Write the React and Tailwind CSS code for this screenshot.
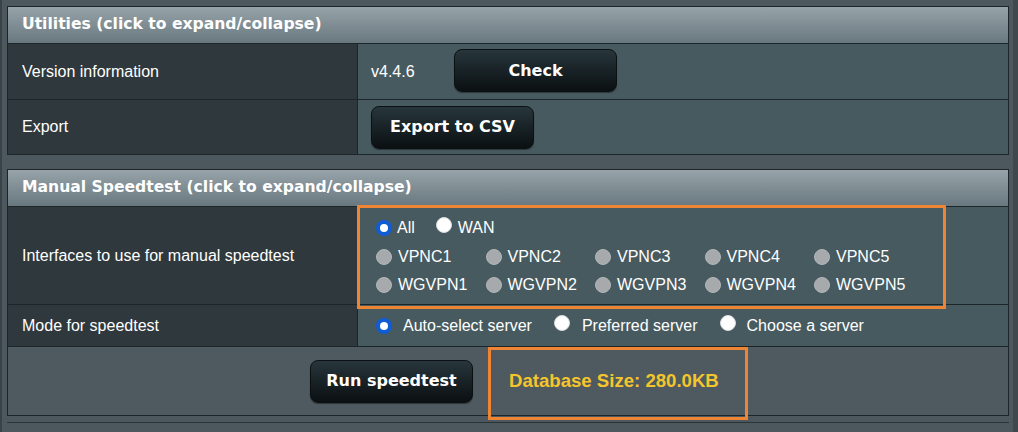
import React from "react";

const body = { fontFamily: '"Liberation Sans", Arial, sans-serif' };
const bold = { fontFamily: '"DejaVu Sans", Verdana, sans-serif' };

function Radio({ state }) {
  if (state === "checked")
    return (
      <span className="inline-flex w-[16px] h-[16px] rounded-full bg-[#0f5cd4] items-center justify-center shrink-0">
        <span className="w-[8px] h-[8px] rounded-full bg-white" />
      </span>
    );
  if (state === "on")
    return <span className="inline-block w-[16px] h-[16px] rounded-full bg-white border border-[#d9dcdd] shrink-0" />;
  return <span className="inline-block w-[16px] h-[16px] rounded-full bg-[#a6aaac] border border-[#b3b6b8] shrink-0" />;
}

function Btn({ children, className = "" }) {
  return (
    <div
      className={`h-[43px] w-[163px] rounded-[8px] border border-[#0b1113] bg-gradient-to-b from-[#27363c] to-[#0b1012] flex items-center justify-center text-white font-bold text-[16px] shadow-[0_1px_1px_rgba(0,0,0,0.4)] ${className}`}
      style={bold}
    >
      {children}
    </div>
  );
}

function Header({ children }) {
  return (
    <div
      className="h-[37px] bg-gradient-to-b from-[#97a3a9] to-[#69787f] border-b border-[#1c2528] flex items-center pl-[14px] text-white font-bold text-[15.6px]"
      style={bold}
    >
      {children}
    </div>
  );
}

function Row({ label, h, children, last }) {
  return (
    <div className={`flex ${last ? "" : "border-b border-[#1c2528]"}`} style={{ height: h }}>
      <div className="w-[350px] shrink-0 bg-[#2f383c] border-r border-[#1c2528] flex items-center pl-[14px] text-white text-[16px]">
        {label}
      </div>
      <div className="flex-1 bg-[#475a5f] flex items-center pl-[13px] text-white text-[16px]">{children}</div>
    </div>
  );
}

const vpnc = ["VPNC1", "VPNC2", "VPNC3", "VPNC4", "VPNC5"];
const wg = ["WGVPN1", "WGVPN2", "WGVPN3", "WGVPN4", "WGVPN5"];

export default function App() {
  return (
    <div className="w-[1018px] h-[432px] bg-[#4c585d] relative overflow-hidden flex" style={body}>
      <div className="w-[2px] bg-[#394246] shrink-0" />
      <div className="w-[1011px] shrink-0 pl-[5px] pt-[6px]">
        <div className="w-[1002px] border border-[#1c2528]">
          <Header>Utilities (click to expand/collapse)</Header>
          <Row label="Version information" h={56}>
            <span className="w-[83px]">v4.4.6</span>
            <Btn className="-mt-[2px]">Check</Btn>
          </Row>
          <Row label="Export" h={54} last>
            <Btn>Export to CSV</Btn>
          </Row>
        </div>

        <div className="w-[1002px] border border-[#1c2528] mt-[14px]">
          <Header>Manual Speedtest (click to expand/collapse)</Header>
          <div className="flex border-b border-[#1c2528] h-[98px]">
            <div className="w-[350px] shrink-0 bg-[#2f383c] border-r border-[#1c2528] flex items-center pl-[14px] text-white text-[16px]">
              Interfaces to use for manual speedtest
            </div>
            <div className="flex-1 bg-[#475a5f] flex flex-col justify-center pl-[18px] pt-[2px] text-white text-[16px]">
              <div className="h-[28.5px] flex items-center">
                <Radio state="checked" />
                <span className="ml-[5px]">All</span>
                <span className="ml-[21px]"><Radio state="on" /></span>
                <span className="ml-[6px]">WAN</span>
              </div>
              <div className="h-[28.5px] grid grid-cols-[repeat(5,109.5px)] items-center">
                {vpnc.map((v) => (
                  <div key={v} className="flex items-center">
                    <Radio />
                    <span className="ml-[6px]">{v}</span>
                  </div>
                ))}
              </div>
              <div className="h-[28.5px] grid grid-cols-[repeat(5,109.5px)] items-center">
                {wg.map((v) => (
                  <div key={v} className="flex items-center">
                    <Radio />
                    <span className="ml-[6px]">{v}</span>
                  </div>
                ))}
              </div>
            </div>
          </div>
          <div className="flex border-b border-[#1c2528] h-[42px]">
            <div className="w-[350px] shrink-0 bg-[#2f383c] border-r border-[#1c2528] flex items-center pl-[14px] text-white text-[16px]">
              Mode for speedtest
            </div>
            <div className="flex-1 bg-[#475a5f] flex items-center pl-[18px] text-white text-[16px]">
              <Radio state="checked" />
              <span className="ml-[11px]">Auto-select server</span>
              <span className="ml-[22px]"><Radio state="on" /></span>
              <span className="ml-[12px]">Preferred server</span>
              <span className="ml-[22px]"><Radio state="on" /></span>
              <span className="ml-[11px]">Choose a server</span>
            </div>
          </div>
          <div className="h-[68px] bg-[#4e5a5f] flex items-center pl-[302px]">
            <Btn className="w-[162px]">Run speedtest</Btn>
            <span className="ml-[36px] text-[18.6px] font-bold text-[#f5c52c]">Database Size: 280.0KB</span>
          </div>
        </div>
        <div className="w-[1002px] mt-[6px] border-t border-[#2a3336]" />
      </div>
      <div className="flex-1 bg-[#3f484b]" />

      <div className="absolute left-[357px] top-[205px] w-[589px] h-[104px] border-[3px] border-[#ee8535]" />
      <div className="absolute left-[488px] top-[347px] w-[260px] h-[73px] border-[3px] border-[#ee8535]" />
    </div>
  );
}
